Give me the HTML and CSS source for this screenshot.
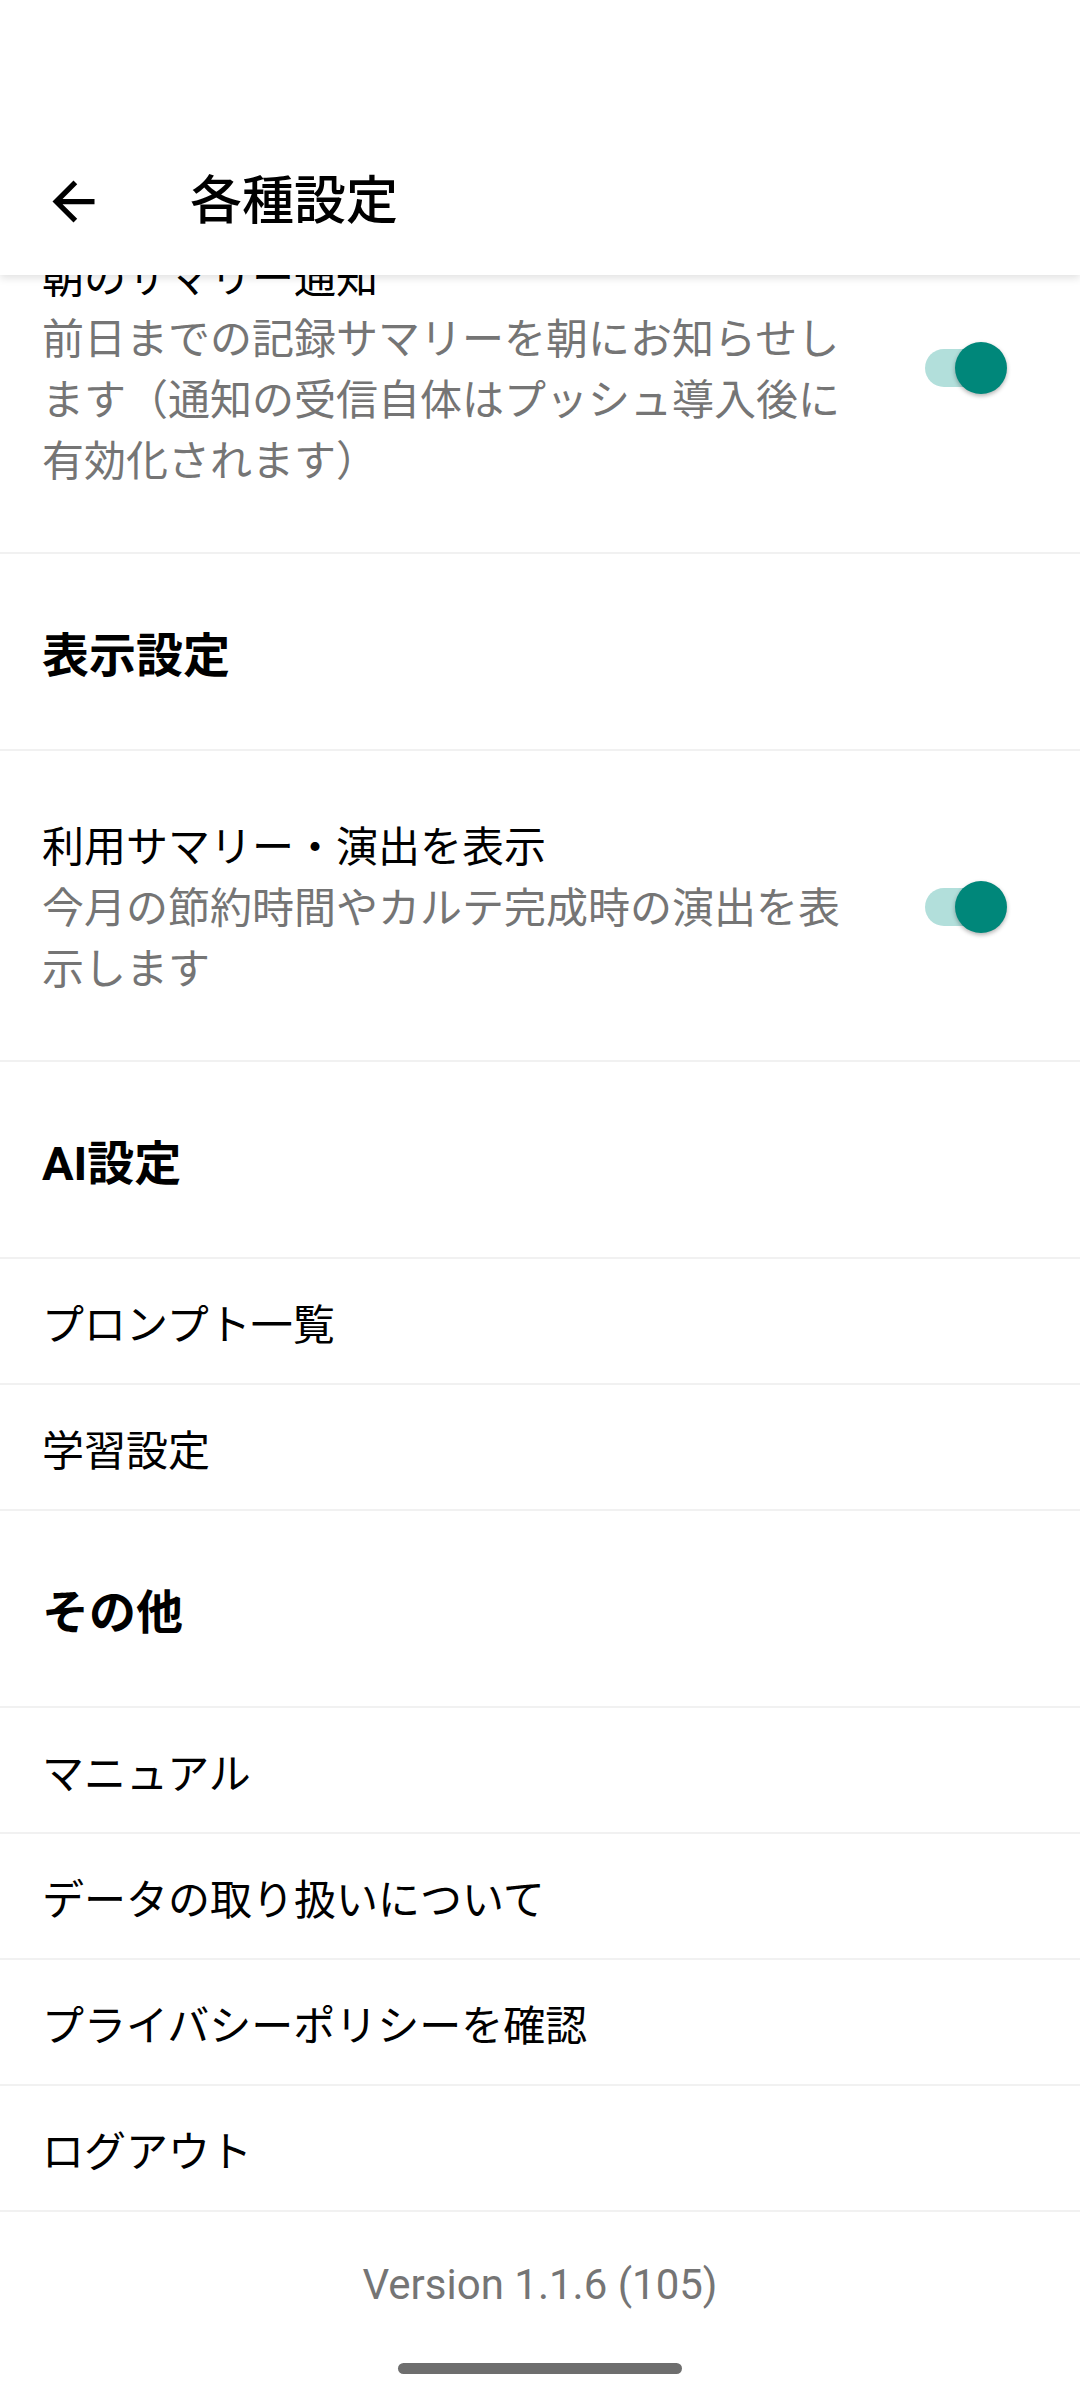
FILE: index.html
```html
<!DOCTYPE html>
<html lang="ja">
<head>
<meta charset="utf-8">
<title>各種設定</title>
<link rel="stylesheet" href="styles.css">
</head>
<body>
<div class="screen">
  <div class="status-bar"></div>
  <header class="app-bar">
    <span class="back" aria-label="戻る">
      <svg viewBox="0 0 24 24" width="63" height="63"><path d="M20 11H7.83l5.59-5.59L12 4l-8 8 8 8 1.41-1.41L7.83 13H20v-2z" fill="#000"/></svg>
    </span>
    <h1 class="title">各種設定</h1>
  </header>
  <main class="list">
    <div class="row toggle-row">
      <div class="texts">
        <div class="row-title">朝のサマリー通知</div>
        <div class="row-sub">前日までの記録サマリーを朝にお知らせします（通知の受信自体はプッシュ導入後に有効化されます）</div>
      </div>
      <span class="switch"><span class="track"></span><span class="thumb"></span></span>
    </div>
    <div class="section">表示設定</div>
    <div class="row toggle-row">
      <div class="texts">
        <div class="row-title">利用サマリー・演出を表示</div>
        <div class="row-sub">今月の節約時間やカルテ完成時の演出を表示します</div>
      </div>
      <span class="switch"><span class="track"></span><span class="thumb"></span></span>
    </div>
    <div class="section">AI設定</div>
    <div class="row item">プロンプト一覧</div>
    <div class="row item">学習設定</div>
    <div class="section">その他</div>
    <div class="row item">マニュアル</div>
    <div class="row item">データの取り扱いについて</div>
    <div class="row item">プライバシーポリシーを確認</div>
    <div class="row item">ログアウト</div>
    <div class="version">Version 1.1.6 (105)</div>
  </main>
  <div class="gesture"><span class="handle"></span></div>
</div>
</body>
</html>
```
FILE: styles.css
```css
html, body {
  margin: 0;
  padding: 0;
  background: #ffffff;
}
body {
  font-family: Roboto, "Noto Sans CJK JP", sans-serif;
  color: #000000;
  width: 1080px;
  height: 2400px;
  overflow: hidden;
}
.screen {
  width: 1080px;
  height: 2400px;
  overflow: hidden;
  display: flex;
  flex-direction: column;
}
.status-bar {
  height: 128px;
  background: #ffffff;
  position: relative;
  z-index: 3;
}
.app-bar {
  height: 147px;
  display: flex;
  align-items: center;
  background: #ffffff;
  position: relative;
  z-index: 2;
  box-shadow: 0 3px 8px rgba(0, 0, 0, 0.12);
}
.back {
  width: 63px;
  height: 63px;
  margin-left: 42px;
  display: flex;
}
.title {
  margin: 0 0 0 85px;
  font-size: 52px;
  font-weight: 500;
  line-height: 80px;
  color: #000000;
}
.list {
  margin-top: -93px;
  display: flex;
  flex-direction: column;
}
.row {
  border-bottom: 2px solid #f1f1f1;
  padding: 0 42px;
}
.toggle-row {
  display: flex;
  align-items: center;
  padding: 66px 73px 60px 42px;
}
.texts {
  flex: 1;
  min-width: 0;
  margin-right: 76px;
}
.row-title {
  font-size: 42px;
  line-height: 61px;
  color: #000000;
}
.row-sub {
  font-size: 42px;
  line-height: 61px;
  color: #757575;
}
.switch {
  position: relative;
  width: 82px;
  height: 52px;
  flex: none;
  margin-top: -4px;
}
.track {
  position: absolute;
  left: 0;
  top: 7px;
  width: 72px;
  height: 38px;
  border-radius: 19px;
  background: #b2dfdb;
}
.thumb {
  position: absolute;
  right: 0;
  top: 0;
  width: 52px;
  height: 52px;
  border-radius: 50%;
  background: #00877a;
  box-shadow: 0 2px 4px rgba(0, 0, 0, 0.3);
}
.section {
  height: 195px;
  display: flex;
  align-items: center;
  padding: 0 42px;
  font-size: 47px;
  font-weight: 700;
  border-bottom: 2px solid #f1f1f1;
}
.item {
  height: 124px;
  display: flex;
  align-items: center;
  font-size: 42px;
}
.version {
  padding-top: 42px;
  text-align: center;
  font-size: 42px;
  line-height: 61px;
  color: #757575;
}
.gesture {
  display: flex;
  justify-content: center;
  padding-top: 48px;
}
.handle {
  width: 284px;
  height: 11px;
  border-radius: 6px;
  background: #6e6e6e;
}
```
